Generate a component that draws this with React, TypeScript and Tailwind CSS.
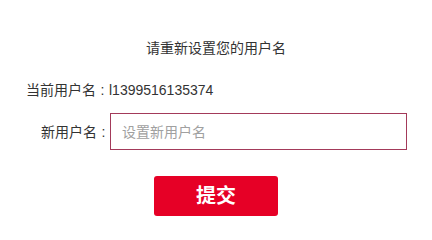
function Colon() {
  return <span className="inline-block w-[13px] text-center">:</span>;
}

export default function App() {
  return (
    <div className="flex min-h-[213px] w-full flex-col items-center bg-white pt-[38px] font-['Liberation_Sans','Noto_Sans_CJK_SC',sans-serif] text-[14px] text-[#333]">
      <h1 className="h-5 text-[14px] leading-5 font-normal">请重新设置您的用户名</h1>

      <div className="mt-[22px] flex w-full items-center px-[26px] whitespace-nowrap">
        <span className="leading-5">
          当前用户名
          <Colon />
        </span>
        <span className="leading-5">l1399516135374</span>
      </div>

      <div className="mt-[13px] flex w-full items-center pl-[26px] pr-[25px]">
        <label htmlFor="new-name" className="w-[84px] shrink-0 whitespace-nowrap text-right leading-5">
          新用户名
          <Colon />
        </label>
        <input
          id="new-name"
          type="text"
          placeholder="设置新用户名"
          className="h-[37px] flex-1 border border-[#a33a5a] px-[11px] text-[14px] text-[#333] outline-none placeholder:text-[#a0a0a0]"
        />
      </div>

      <button className="mt-[26px] h-10 w-[124px] rounded-[3px] bg-[#e60026] text-[20px] font-bold text-white">
        提交
      </button>
    </div>
  );
}
